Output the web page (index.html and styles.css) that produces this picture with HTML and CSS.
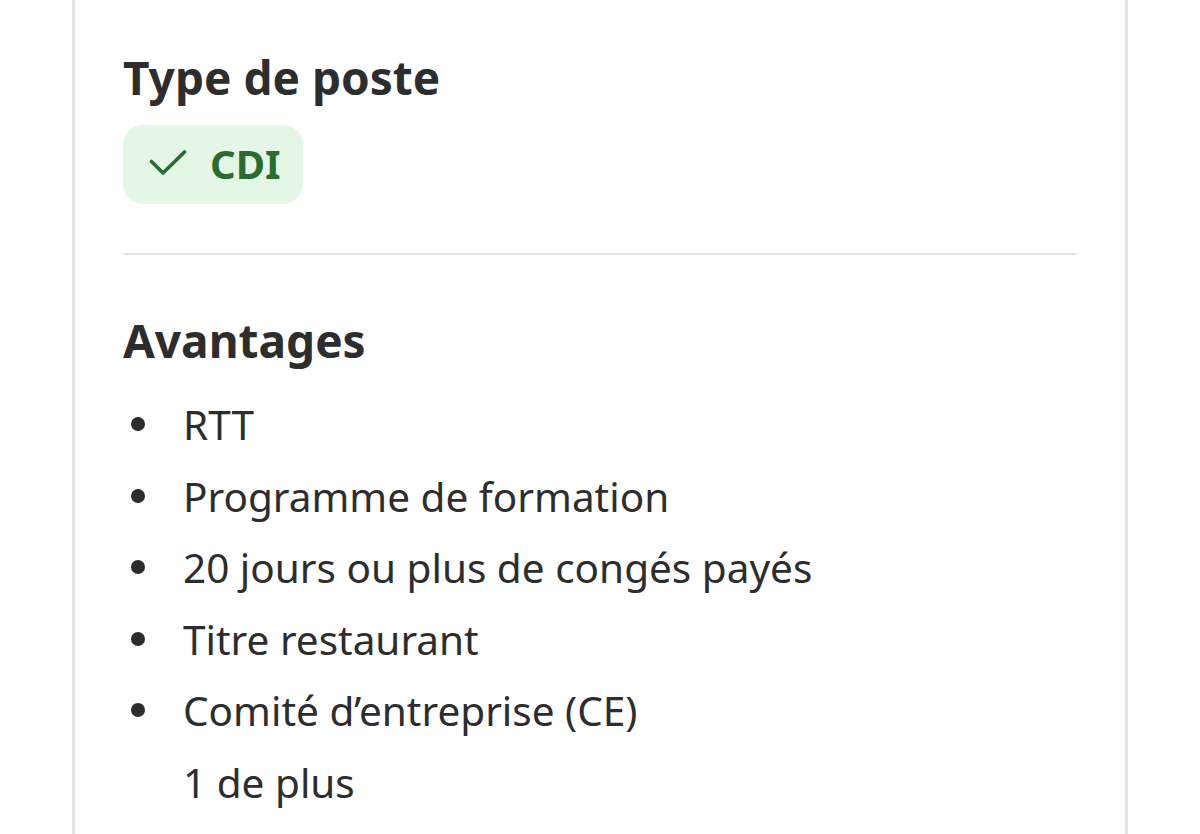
FILE: index.html
```html
<!DOCTYPE html>
<html lang="fr">
<head>
<meta charset="utf-8">
<link rel="stylesheet" href="styles.css">
</head>
<body>
<div class="card">
  <section class="section">
    <h2 class="heading">Type de poste</h2>
    <div class="chip">
      <svg class="check" viewBox="0 0 38 28" width="38" height="28" aria-hidden="true">
        <path d="M2.5 12.5L14 24L35.5 3" fill="none" stroke="currentColor" stroke-width="3.6" stroke-linecap="round" stroke-linejoin="round"/>
      </svg>
      <span class="chip-text">CDI</span>
    </div>
  </section>
  <hr class="divider">
  <section class="section">
    <h2 class="heading heading-2">Avantages</h2>
    <ul class="list">
      <li>RTT</li>
      <li>Programme de formation</li>
      <li>20 jours ou plus de congés payés</li>
      <li>Titre restaurant</li>
      <li>Comité d’entreprise (CE)</li>
    </ul>
    <div class="more">1 de plus</div>
  </section>
</div>
</body>
</html>
```
FILE: styles.css
```css
html, body {
  margin: 0;
  padding: 0;
  background: #ffffff;
}
body {
  font-family: "Noto Sans", "Open Sans", sans-serif;
  color: #2d2d2d;
  height: 834px;
  overflow: hidden;
}
.card {
  margin-left: 72px;
  width: 954px;
  border-left: 3px solid #e4e2e0;
  border-right: 3px solid #e4e2e0;
  padding: 46px 48px 0 48px;
  height: 788px;
  box-sizing: content-box;
}
.heading {
  margin: 0;
  font-size: 46px;
  font-weight: 700;
  line-height: 1.36;
}
.chip {
  display: inline-flex;
  align-items: center;
  gap: 23px;
  margin-top: 16px;
  height: 79px;
  padding: 0 22px 0 26px;
  background: #e4f7e6;
  border-radius: 20px;
  color: #2a6b30;
}
.check {
  display: block;
  margin-top: -2px;
}
.chip-text {
  font-size: 40px;
  font-weight: 700;
  line-height: 1;
}
.divider {
  border: 0;
  height: 2px;
  background: #e4e2e0;
  margin: 49px 0 0 0;
}
.heading-2 {
  margin-top: 54px;
}
.list {
  list-style: none;
  margin: 18px 0 0 0;
  padding: 0 0 0 60px;
  font-size: 40.5px;
  line-height: 71.5px;
}
.list li::before {
  content: "";
  display: inline-block;
  width: 14px;
  height: 14px;
  border-radius: 50%;
  background: #2d2d2d;
  margin-left: -52px;
  margin-right: 38px;
  vertical-align: 9px;
}
.more {
  margin-left: 60px;
  font-size: 40.5px;
  line-height: 71.5px;
}
```
